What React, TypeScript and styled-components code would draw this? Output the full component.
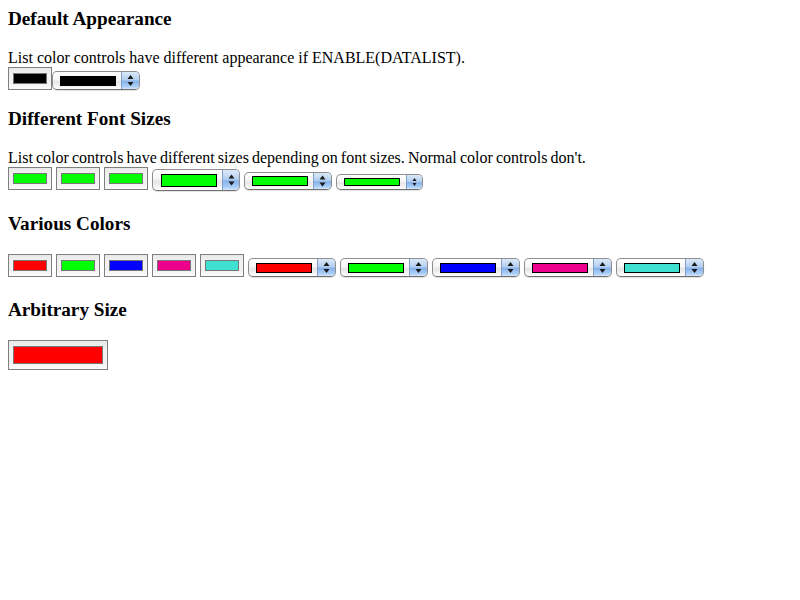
import React from "react";
import styled, { createGlobalStyle } from "styled-components";

const GlobalStyle = createGlobalStyle`
  html, body { background: #ffffff; }
  body {
    margin: 8px;
    font-family: "Liberation Serif", "Times New Roman", serif;
    font-size: 16px;
    color: #000;
  }
`;

const Section = styled.section<{ $after: number }>`
  margin-bottom: ${(p) => p.$after}px;
`;

const Heading = styled.h3`
  margin: 0 0 19px 0;
  font-size: 19.2px;
  font-weight: bold;
  line-height: 22px;
`;

const Text = styled.div<{ $ws?: number }>`
  line-height: 18px;
  height: 18px;
  white-space: nowrap;
  word-spacing: ${(p) => p.$ws ?? 0}px;
`;

const Row = styled.div<{ $gap: number }>`
  display: flex;
  align-items: flex-end;
  gap: ${(p) => p.$gap}px;
`;

const ColorButton = styled.div<{ $w: number; $h: number }>`
  box-sizing: border-box;
  width: ${(p) => p.$w}px;
  height: ${(p) => p.$h}px;
  display: flex;
  padding: 5px 4px;
  border: 1px solid #7f7f7f;
  background: linear-gradient(
    to bottom,
    #e9e9e9 0%,
    #f3f3f3 35%,
    #f1f1f1 70%,
    #fbfbfb 100%
  );
`;

const Swatch = styled.div<{ $c: string }>`
  flex: 1;
  box-sizing: border-box;
  border: 1px solid #777;
  background: ${(p) => p.$c};
`;

const ListBox = styled.div<{ $w: number; $h: number; $mb?: number }>`
  box-sizing: border-box;
  width: ${(p) => p.$w}px;
  height: ${(p) => p.$h}px;
  margin-bottom: ${(p) => p.$mb ?? 0}px;
  display: flex;
  align-items: stretch;
  border: 1px solid #8e8e8e;
  border-bottom-color: #6f6f6f;
  border-radius: 5px;
  overflow: hidden;
  background: linear-gradient(
    to bottom,
    #ffffff 0%,
    #f6f6f6 45%,
    #e6e6e6 55%,
    #f4f4f4 85%,
    #ffffff 100%
  );
  box-shadow: 0 1px 1px rgba(0, 0, 0, 0.12);
`;

const ListFace = styled.div<{ $pl: number }>`
  flex: 1;
  display: flex;
  align-items: center;
  padding-left: ${(p) => p.$pl}px;
  padding-right: 5px;
`;

const ListSwatch = styled.div<{ $c: string; $h: number }>`
  box-sizing: border-box;
  width: 56px;
  height: ${(p) => p.$h}px;
  border: 1px solid #000;
  background: ${(p) => p.$c};
`;

const Arrow = styled.div<{ $w: number }>`
  width: ${(p) => p.$w}px;
  display: flex;
  align-items: center;
  justify-content: center;
  border-left: 1px solid #7d9fcc;
  background: linear-gradient(
    to bottom,
    #dbe9f8 0%,
    #b5d0f1 45%,
    #87b3ea 55%,
    #a9cdf5 85%,
    #d4e8fb 100%
  );
`;

const ArrowIcon = ({ s }: { s: number }) => (
  <svg width={7} height={s} viewBox={`0 0 7 ${s}`}>
    <polygon points={`3.5,${s / 2 - 5.5} 6.5,${s / 2 - 1.5} 0.5,${s / 2 - 1.5}`} fill="#1a1a1a" />
    <polygon points={`0.5,${s / 2 + 1.5} 6.5,${s / 2 + 1.5} 3.5,${s / 2 + 5.5}`} fill="#1a1a1a" />
  </svg>
);

const ArrowIconSmall = ({ s }: { s: number }) => (
  <svg width={5} height={s} viewBox={`0 0 5 ${s}`}>
    <polygon points={`2.5,${s / 2 - 4} 4.5,${s / 2 - 1} 0.5,${s / 2 - 1}`} fill="#1a1a1a" />
    <polygon points={`0.5,${s / 2 + 1} 4.5,${s / 2 + 1} 2.5,${s / 2 + 4}`} fill="#1a1a1a" />
  </svg>
);

type ListProps = { c: string; w?: number; h: number; sh: number; aw: number; pl?: number; small?: boolean; mb?: number };

const ListColor = ({ c, w = 88, h, sh, aw, pl = 7, small, mb }: ListProps) => (
  <ListBox $w={w} $h={h} $mb={mb}>
    <ListFace $pl={pl}>
      <ListSwatch $c={c} $h={sh} />
    </ListFace>
    <Arrow $w={aw}>{small ? <ArrowIconSmall s={h - 2} /> : <ArrowIcon s={h - 2} />}</Arrow>
  </ListBox>
);

const Color = ({ c, w = 44, h = 23 }: { c: string; w?: number; h?: number }) => (
  <ColorButton $w={w} $h={h}>
    <Swatch $c={c} />
  </ColorButton>
);

const colors = ["#ff0000", "#00ff00", "#0000ff", "#ec008c", "#40e0d0"];

export default function App() {
  return (
    <>
      <GlobalStyle />
      <Section $after={18}>
        <Heading>Default Appearance</Heading>
        <Text>List color controls have different appearance if ENABLE(DATALIST).</Text>
        <Row $gap={0}>
          <Color c="#000000" />
          <ListColor c="#000000" h={19} sh={10} aw={18} />
        </Row>
      </Section>
      <Section $after={23}>
        <Heading>Different Font Sizes</Heading>
        <Text $ws={-0.9}>List color controls have different sizes depending on font sizes. Normal color controls don't.</Text>
        <Row $gap={4}>
          <Color c="#00ff00" />
          <Color c="#00ff00" />
          <Color c="#00ff00" />
          <ListColor c="#00ff00" h={22} sh={13} aw={20} pl={8} mb={-1} />
          <ListColor c="#00ff00" h={18} sh={10} aw={17} />
          <ListColor c="#00ff00" w={87} h={16} sh={8} aw={15} small />
        </Row>
      </Section>
      <Section $after={22}>
        <Heading>Various Colors</Heading>
        <Row $gap={4}>
          {colors.map((c) => (
            <Color key={"b" + c} c={c} />
          ))}
          {colors.map((c) => (
            <ListColor key={"l" + c} c={c} h={19} sh={10} aw={18} />
          ))}
        </Row>
      </Section>
      <Section $after={0}>
        <Heading>Arbitrary Size</Heading>
        <Row $gap={0}>
          <Color c="#ff0000" w={100} h={30} />
        </Row>
      </Section>
    </>
  );
}
